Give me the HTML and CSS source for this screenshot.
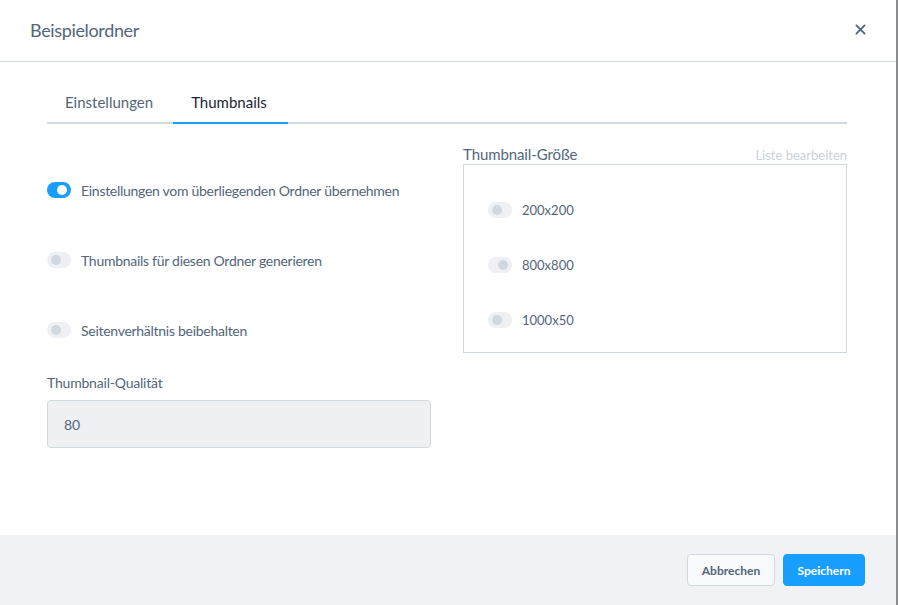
FILE: index.html
```html
<!DOCTYPE html>
<html lang="de">
<head>
<meta charset="utf-8">
<title>Beispielordner</title>
<link rel="stylesheet" href="styles.css">
</head>
<body>
<div class="modal">
  <header class="modal-header">
    <h2 class="modal-title">Beispielordner</h2>
    <button class="modal-close" aria-label="Schließen">
      <svg width="12" height="12" viewBox="0 0 12 12"><path d="M1.5 1.5 L10.5 10.5 M10.5 1.5 L1.5 10.5" stroke="#52667a" stroke-width="2" stroke-linecap="round"/></svg>
    </button>
  </header>
  <div class="modal-body">
    <nav class="tabs">
      <span class="tab tab-first">Einstellungen</span>
      <span class="tab tab-active">Thumbnails</span>
    </nav>
    <div class="columns">
      <div class="col-left">
        <div class="switch-row first">
          <span class="switch on"><span class="knob"></span></span>
          <span class="switch-label">Einstellungen vom überliegenden Ordner übernehmen</span>
        </div>
        <div class="switch-row">
          <span class="switch"><span class="knob"></span></span>
          <span class="switch-label">Thumbnails für diesen Ordner generieren</span>
        </div>
        <div class="switch-row">
          <span class="switch"><span class="knob"></span></span>
          <span class="switch-label">Seitenverhältnis beibehalten</span>
        </div>
        <label class="field-label">Thumbnail-Qualität</label>
        <div class="field-input">80</div>
      </div>
      <div class="col-right">
        <div class="sizes-head">
          <span class="sizes-title">Thumbnail-Größe</span>
          <span class="sizes-edit">Liste bearbeiten</span>
        </div>
        <div class="sizes-box">
          <div class="size-row">
            <span class="switch"><span class="knob"></span></span>
            <span class="size-label">200x200</span>
          </div>
          <div class="size-row">
            <span class="switch checked-disabled"><span class="knob"></span></span>
            <span class="size-label">800x800</span>
          </div>
          <div class="size-row">
            <span class="switch"><span class="knob"></span></span>
            <span class="size-label">1000x50</span>
          </div>
        </div>
      </div>
    </div>
  </div>
  <footer class="modal-footer">
    <button class="btn btn-default">Abbrechen</button>
    <button class="btn btn-primary">Speichern</button>
  </footer>
</div>
</body>
</html>
```
FILE: styles.css
```css
* { box-sizing: border-box; }
html, body { margin: 0; padding: 0; }
body {
  background: #8a8d90;
  width: 898px;
  height: 605px;
  overflow: hidden;
  font-family: "Lato", "Noto Sans", sans-serif;
  color: #52667a;
}
.modal {
  width: 896px;
  height: 605px;
  background: #fff;
  display: flex;
  flex-direction: column;
}
.modal-header {
  height: 62px;
  border-bottom: 1px solid #d1d9e0;
  display: flex;
  align-items: center;
  justify-content: space-between;
  padding: 0 30px 0 30px;
}
.modal-title {
  margin: 0;
  font-size: 18px;
  font-weight: 400;
  letter-spacing: -0.35px;
  color: #52667a;
  padding-bottom: 2px;
}
.modal-close {
  border: 0;
  background: none;
  padding: 0;
  width: 11px;
  height: 11px;
  display: flex;
  margin-bottom: 2px;
}
.modal-close svg { width: 11px; height: 11px; }
.modal-body {
  flex: 1;
  padding: 20px 49px 0 47px;
}
.tabs {
  display: flex;
  border-bottom: 2px solid #d1d9e0;
  height: 42px;
}
.tab {
  padding: 0 18px;
  font-size: 15px;
  line-height: 40px;
  color: #52667a;
  margin-bottom: -2px;
  border-bottom: 2px solid transparent;
}
.tab-first { padding: 0 20px 0 18px; }
.tab-active {
  color: #1a2633;
  border-bottom-color: #189eff;
  padding: 0 21px 0 18px;
}
.columns {
  display: grid;
  grid-template-columns: 384px 384px;
  column-gap: 32px;
  margin-top: 22px;
}
.switch-row {
  display: flex;
  align-items: center;
  height: 16px;
  margin-top: 54px;
}
.switch-row.first { margin-top: 36px; }
.switch {
  position: relative;
  width: 24px;
  height: 16px;
  border-radius: 8px;
  background: #eef0f4;
  flex: none;
}
.knob {
  position: absolute;
  top: 3px;
  left: 4px;
  width: 10px;
  height: 10px;
  border-radius: 50%;
  background: #d1d9e0;
}
.switch.on { background: #189eff; }
.switch.on .knob { background: #fff; left: 10px; }
.switch.checked-disabled .knob { left: 10px; }
.switch-label {
  margin-left: 10px;
  font-size: 14px;
  letter-spacing: -0.28px;
  color: #52667a;
}
.field-label {
  display: block;
  margin-top: 36px;
  font-size: 14px;
  line-height: 18px;
  letter-spacing: -0.2px;
  color: #52667a;
}
.field-input {
  margin-top: 8px;
  height: 48px;
  border: 1px solid #d1d9e0;
  border-radius: 4px;
  background: #eef0f4;
  padding: 0 16px;
  display: flex;
  align-items: center;
  font-size: 14px;
  color: #52667a;
}
.sizes-head {
  display: flex;
  justify-content: space-between;
  align-items: baseline;
  height: 19px;
  margin-top: -1px;
}
.sizes-title { font-size: 15px; color: #52667a; letter-spacing: -0.1px; }
.sizes-edit { font-size: 13px; color: #c9d1d9; }
.sizes-box {
  height: 189px;
  border: 1px solid #d1d9e0;
  padding: 37px 24px 0 24px;
}
.size-row {
  display: flex;
  align-items: center;
  height: 16px;
  margin-bottom: 39px;
}
.size-label {
  margin-left: 10px;
  font-size: 13px;
  color: #52667a;
}
.modal-footer {
  height: 70px;
  background: #f0f2f5;
  display: flex;
  justify-content: flex-end;
  align-items: center;
  gap: 8px;
  padding: 0 31px 0 0;
}
.btn {
  height: 32px;
  border-radius: 4px;
  font-family: inherit;
  font-size: 12px;
  font-weight: 700;
  padding: 0;
  cursor: pointer;
}
.btn-default {
  width: 88px;
  background: #f9fafb;
  border: 1px solid #d1d9e0;
  color: #52667a;
}
.btn-primary {
  width: 82px;
  background: #189eff;
  border: 1px solid #189eff;
  color: #fff;
}
```
